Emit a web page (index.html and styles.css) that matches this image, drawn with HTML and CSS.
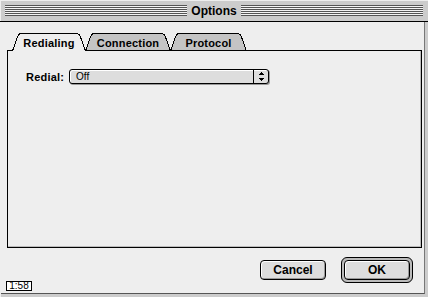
FILE: index.html
```html
<!DOCTYPE html>
<html>
<head>
  <meta charset="UTF-8">
  <title>Options</title>
  <link rel="stylesheet" href="styles.css">
</head>
<body>
  <div class="window">
    <div class="titlebar">
      <span class="stripes"></span>
      <span class="title">Options</span>
      <span class="stripes"></span>
    </div>

    <div class="content">
      <div class="tabs">
        <div class="tab tab-active tab-redialing">
          <svg class="tab-shape" width="74" height="18" shape-rendering="crispEdges">
            <path d="M0.5 18 L5.5 4 Q6.5 0.5 9.5 0.5 L64.5 0.5 Q67.5 0.5 68.5 4 L73.5 18" />
          </svg>
          <span class="tab-label">Redialing</span>
        </div>
        <div class="tab tab-connection">
          <svg class="tab-shape" width="86" height="18" shape-rendering="crispEdges">
            <path d="M0.5 18 L5.5 4 Q6.5 0.5 9.5 0.5 L76.5 0.5 Q79.5 0.5 80.5 4 L85.5 18" />
          </svg>
          <span class="tab-label">Connection</span>
        </div>
        <div class="tab tab-protocol">
          <svg class="tab-shape" width="77" height="18" shape-rendering="crispEdges">
            <path d="M0.5 18 L5.5 4 Q6.5 0.5 9.5 0.5 L67.5 0.5 Q70.5 0.5 71.5 4 L76.5 18" />
          </svg>
          <span class="tab-label">Protocol</span>
        </div>
      </div>

      <div class="panel">
        <div class="field">
          <label class="field-label">Redial:</label>
          <div class="popup">
            <span class="popup-value">Off</span>
            <span class="popup-arrows">
              <svg width="7" height="9" shape-rendering="crispEdges">
                <path d="M3 0h1v1h-1z M2 1h3v1h-3z M1 2h5v1h-5z M1 6h5v1h-5z M2 7h3v1h-3z M3 8h1v1h-1z" />
              </svg>
            </span>
          </div>
        </div>
      </div>

      <div class="footer">
        <span class="clock">1:58</span>
        <div class="buttons">
          <button class="btn">Cancel</button>
          <span class="default-ring"><button class="btn">OK</button></span>
        </div>
      </div>
    </div>
  </div>
</body>
</html>
```

FILE: styles.css
```css
body { margin: 0; background: #cccccc; font-family: "Liberation Sans", Arial, sans-serif; color: #000; }

.window { width: 428px; height: 297px; box-sizing: border-box; background: #cccccc; display: flex; flex-direction: column; box-shadow: inset 1px 1px #eeeeee; }

/* title bar */
.titlebar { height: 21px; border-bottom: 1px solid #000; display: flex; align-items: center; gap: 3px; padding: 0 5px; }
.stripes { flex: 1; height: 11px; background: repeating-linear-gradient(to bottom, #555555 0 1px, #f4f4f4 1px 2px); }
.title { font-weight: bold; font-size: 12px; line-height: 14px; padding: 0 1px; }

/* window body */
.content { flex: 1; margin: 0 3px 3px 1px; background: #eeeeee; border-right: 1px solid #777777; border-bottom: 1px solid #555555; display: flex; flex-direction: column; padding-top: 11px; }

.tabs { display: flex; margin-left: 11px; margin-bottom: -1px; height: 18px; }
.tab { position: relative; flex: none; height: 18px; display: flex; align-items: center; justify-content: center; z-index: 0; }
.tab + .tab { margin-left: -1px; }
.tab-redialing { width: 74px; }
.tab-connection { width: 86px; }
.tab-protocol { width: 77px; }
.tab-shape { position: absolute; left: 0; top: 0; }
.tab-shape path { fill: #c4c4c4; stroke: #000; stroke-width: 1; }
.tab-active { z-index: 2; }
.tab-active .tab-shape path { fill: #eeeeee; }
.tab-label { position: relative; font-weight: bold; font-size: 11px; line-height: 12px; margin-top: 2px; letter-spacing: 0.2px; }

.panel { position: relative; z-index: 1; height: 198px; box-sizing: border-box; margin: 0 2px 0 6px; border: 1px solid #000; background: #eeeeee; box-shadow: inset -1px -1px #bbbbbb; padding: 18px 0 0 18px; }
.field { display: flex; align-items: center; gap: 5px; }
.field-label { font-weight: bold; font-size: 11px; letter-spacing: 0.2px; }

.popup { width: 200px; height: 15px; box-sizing: border-box; border: 1px solid #000; border-radius: 3px; background: #dddddd; box-shadow: inset 1px 1px #ffffff, 1px 1px #999999; display: flex; align-items: center; }
.popup-value { flex: 1; padding-left: 6px; font-size: 10px; line-height: 12px; }
.popup-arrows { width: 14px; align-self: stretch; border-left: 1px solid #000; display: flex; align-items: center; justify-content: center; }

/* bottom row */
.footer { flex: 1; display: flex; justify-content: space-between; align-items: flex-start; }
.clock { margin: 33px 0 0 5px; width: 26px; height: 10px; box-sizing: border-box; border: 1px solid #000; background: #fff; font-size: 10px; line-height: 8px; text-align: center; }
.buttons { display: flex; align-items: center; gap: 15px; margin: 9px 11px 0 0; }
.btn { width: 66px; height: 20px; box-sizing: border-box; border: 1px solid #000; border-radius: 4px; background: #dddddd; box-shadow: inset 1px 1px #ffffff, inset -1px -1px #999999; font-family: "Liberation Sans", Arial, sans-serif; font-weight: bold; font-size: 12px; padding: 0; color: #000; }
.default-ring { display: flex; border: 1px solid #000; border-radius: 6px; padding: 2px; background: #bbbbbb; }
```
